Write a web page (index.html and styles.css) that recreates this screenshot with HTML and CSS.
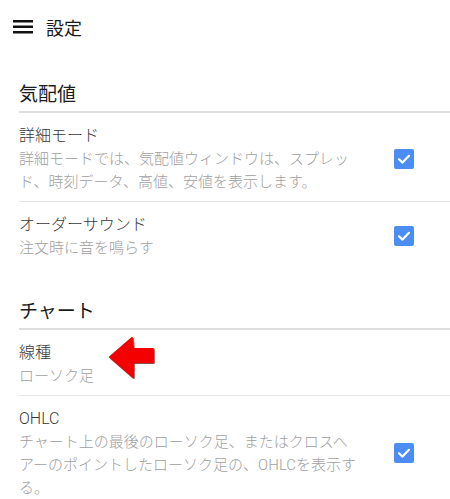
FILE: index.html
```html
<!DOCTYPE html>
<html lang="ja">
<head>
    <meta charset="UTF-8">
    <meta name="viewport" content="width=device-width, initial-scale=1.0">
    <title>設定</title>
    <link rel="stylesheet" href="styles.css">
</head>
<body>
    <div class="app-bar">
        <svg class="menu-icon" width="20" height="14" viewBox="0 0 20 14">
            <rect x="0" y="0" width="20" height="2.5" fill="#111"/>
            <rect x="0" y="5.5" width="20" height="2.5" fill="#111"/>
            <rect x="0" y="11" width="20" height="2.5" fill="#111"/>
        </svg>
        <div class="app-title">設定</div>
    </div>

    <div class="section">
        <div class="section-title">気配値</div>
        <div class="pref">
            <div class="pref-text">
                <div class="pref-title">詳細モード</div>
                <div class="pref-summary">詳細モードでは、気配値ウィンドウは、スプレッド、時刻データ、高値、安値を表示します。</div>
            </div>
            <div class="checkbox"><svg width="20" height="20" viewBox="0 0 20 20"><path d="M5 10.3 L8.5 13.6 L15 6.8" fill="none" stroke="#fff" stroke-width="2.2" stroke-linecap="round" stroke-linejoin="round"/></svg></div>
        </div>
        <div class="pref">
            <div class="pref-text">
                <div class="pref-title">オーダーサウンド</div>
                <div class="pref-summary">注文時に音を鳴らす</div>
            </div>
            <div class="checkbox"><svg width="20" height="20" viewBox="0 0 20 20"><path d="M5 10.3 L8.5 13.6 L15 6.8" fill="none" stroke="#fff" stroke-width="2.2" stroke-linecap="round" stroke-linejoin="round"/></svg></div>
        </div>
    </div>

    <div class="section">
        <div class="section-title">チャート</div>
        <div class="pref">
            <div class="pref-text">
                <div class="pref-title">線種</div>
                <div class="pref-summary">ローソク足</div>
            </div>
        </div>
        <div class="pref">
            <div class="pref-text">
                <div class="pref-title">OHLC</div>
                <div class="pref-summary">チャート上の最後のローソク足、またはクロスヘアーのポイントしたローソク足の、OHLCを表示する。</div>
            </div>
            <div class="checkbox"><svg width="20" height="20" viewBox="0 0 20 20"><path d="M5 10.3 L8.5 13.6 L15 6.8" fill="none" stroke="#fff" stroke-width="2.2" stroke-linecap="round" stroke-linejoin="round"/></svg></div>
        </div>
    </div>

    <!-- annotation arrow -->
    <svg class="arrow" width="52" height="46" viewBox="0 0 52 46">
        <defs>
            <filter id="shade" x="-10%" y="-10%" width="130%" height="130%">
                <feDropShadow dx="0.8" dy="1" stdDeviation="0.6" flood-color="#600" flood-opacity="0.7"/>
            </filter>
        </defs>
        <polygon points="2,21 24,2 25,13 45,13 45,26 25,26 25,41" fill="#f40000" stroke="#f40000" stroke-width="2" stroke-linejoin="round" filter="url(#shade)"/>
    </svg>
</body>
</html>
```

FILE: styles.css
```css
body {
    margin: 0;
    background: #fff;
    font-family: Roboto, "Noto Sans CJK JP", sans-serif;
    font-weight: 300;
    color: #222;
    position: relative;
    overflow: hidden;
    line-break: strict;
}

.app-bar {
    height: 54px;
    display: flex;
    align-items: center;
    padding-left: 13px;
    gap: 13px;
}

.menu-icon {
    display: block;
}

.app-title {
    font-size: 18px;
    font-weight: 400;
    color: #1a1a1a;
}

.section {
    padding: 28px 0 0 19px;
}

.section + .section {
    padding-top: 32px;
}

.section-title {
    font-size: 19px;
    font-weight: 400;
    line-height: 26px;
    padding-bottom: 3px;
    border-bottom: 2px solid #dedede;
    color: #1c1c1c;
}

.pref {
    display: flex;
    align-items: center;
    justify-content: space-between;
    padding: 10px 36px 7px 0;
    border-bottom: 1px solid #e4e4e4;
}

.pref:last-child {
    border-bottom: none;
}

.pref-text {
    width: 350px;
}

.pref-title {
    font-size: 16px;
    line-height: 25px;
    color: #383838;
}

.pref-summary {
    font-size: 15px;
    line-height: 23px;
    color: #a0a0a0;
}

.checkbox {
    width: 20px;
    height: 20px;
    border-radius: 2px;
    background: #4b8df2;
}

.checkbox svg {
    display: block;
}

.arrow {
    position: absolute;
    left: 108px;
    top: 336px;
}
```
